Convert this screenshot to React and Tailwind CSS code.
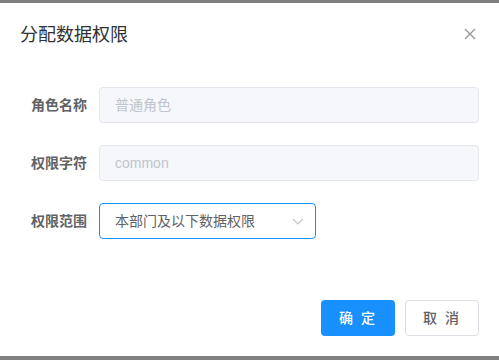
import React from "react";

function Field({ label, children }) {
  return (
    <div className="flex items-center h-[36px] mb-[22px]">
      <label className="w-[79px] shrink-0 pr-[12px] text-right text-[14px] font-bold text-[#606266] leading-[36px]">
        {label}
      </label>
      {children}
    </div>
  );
}

export default function App() {
  return (
    <div
      className="w-[499px] h-[360px] bg-[#808080] pt-[3px] overflow-hidden"
      style={{ fontFamily: '"Liberation Sans", "Noto Sans CJK SC", sans-serif' }}
    >
      <div className="w-[499px] h-[353px] bg-white flex flex-col">
        <div className="relative pt-[20px] px-[20px] pb-[10px]">
          <div className="text-[18px] leading-[24px] text-[#303133]">分配数据权限</div>
          <button className="absolute top-[25px] right-[23px] w-[12px] h-[12px]">
            <svg viewBox="0 0 12 12" width="12" height="12">
              <path d="M1 1 L11 11 M11 1 L1 11" stroke="#909399" strokeWidth="1.2" fill="none" />
            </svg>
          </button>
        </div>
        <div className="pt-[30px] pl-[20px] pr-[20px] pb-[8px] flex-1">
          <Field label="角色名称">
            <div className="flex-1 h-[36px] rounded-[4px] border border-[#e4e7ed] bg-[#f5f7fa] px-[15px] text-[14px] leading-[34px] text-[#c0c4cc]">
              普通角色
            </div>
          </Field>
          <Field label="权限字符">
            <div className="flex-1 h-[36px] rounded-[4px] border border-[#e4e7ed] bg-[#f5f7fa] px-[15px] text-[14px] leading-[34px] text-[#c0c4cc]">
              common
            </div>
          </Field>
          <Field label="权限范围">
            <div className="w-[217px] h-[36px] rounded-[4px] border border-[#1890ff] bg-white pl-[15px] pr-[10px] flex items-center justify-between text-[14px] text-[#606266]">
              <span>本部门及以下数据权限</span>
              <svg viewBox="0 0 14 14" width="14" height="14">
                <path d="M2 5 L7 10 L12 5" stroke="#c0c4cc" strokeWidth="1.2" fill="none" />
              </svg>
            </div>
          </Field>
        </div>
        <div className="flex justify-end gap-[10px] pt-[10px] px-[20px] pb-[20px]">
          <button className="w-[74px] h-[36px] rounded-[4px] bg-[#1890ff] text-white text-[14px] font-medium tracking-[2px]">
            确 定
          </button>
          <button className="w-[74px] h-[36px] rounded-[4px] border border-[#dcdfe6] bg-white text-[#606266] text-[14px] font-medium tracking-[2px]">
            取 消
          </button>
        </div>
      </div>
    </div>
  );
}
